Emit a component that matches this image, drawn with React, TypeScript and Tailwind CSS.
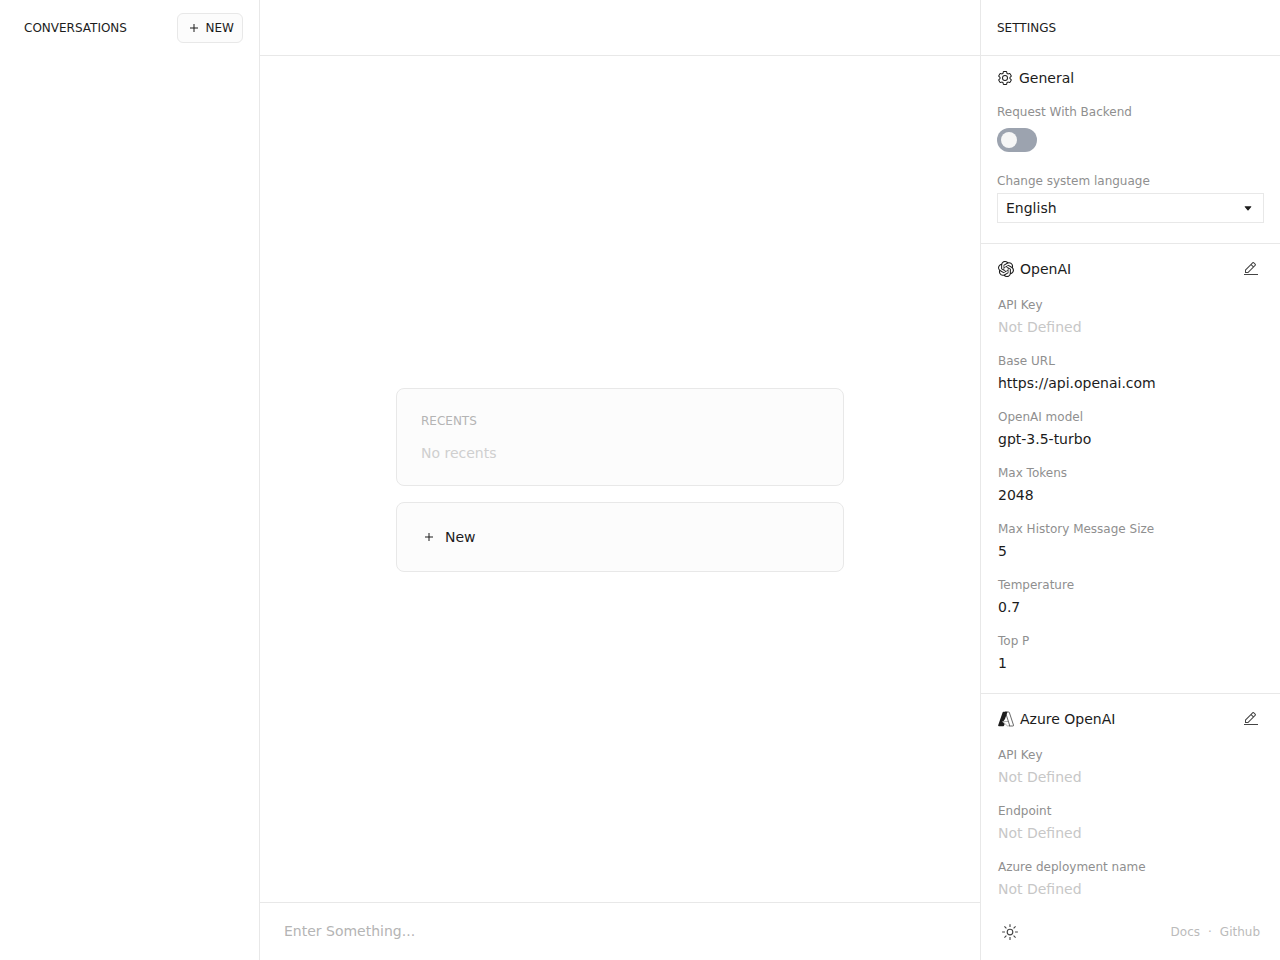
import { useId, useState } from "react";
import type { ReactNode } from "react";
import { SiOpenai } from "react-icons/si";

type Field = { label: string; value?: string };

const openAiFields: Field[] = [
  { label: "API Key" },
  { label: "Base URL", value: "https://api.openai.com" },
  { label: "OpenAI model", value: "gpt-3.5-turbo" },
  { label: "Max Tokens", value: "2048" },
  { label: "Max History Message Size", value: "5" },
  { label: "Temperature", value: "0.7" },
  { label: "Top P", value: "1" },
];

const azureFields: Field[] = [
  { label: "API Key" },
  { label: "Endpoint" },
  { label: "Azure deployment name" },
];

function Icon({ children, size = "size-4" }: { children: ReactNode; size?: string }) {
  return (
    <svg viewBox="0 0 32 32" className={`${size} shrink-0`} fill="currentColor" aria-hidden="true">
      {children}
    </svg>
  );
}

function PlusIcon() {
  return (
    <Icon>
      <path d="M17 15V8h-2v7H8v2h7v7h2v-7h7v-2z" />
    </Icon>
  );
}

function GearIcon() {
  return (
    <Icon>
      <path d="M27 16.76v-1.53l1.92-1.68A2 2 0 0 0 29.3 11l-2.36-4a2 2 0 0 0-1.73-1a2 2 0 0 0-.64.1l-2.43.82a11.35 11.35 0 0 0-1.31-.75l-.51-2.52a2 2 0 0 0-2-1.61h-4.68a2 2 0 0 0-2 1.61l-.51 2.52a11.48 11.48 0 0 0-1.32.75l-2.38-.86A2 2 0 0 0 6.79 6a2 2 0 0 0-1.73 1L2.7 11a2 2 0 0 0 .41 2.51L5 15.24v1.53l-1.89 1.68A2 2 0 0 0 2.7 21l2.36 4a2 2 0 0 0 1.73 1a2 2 0 0 0 .64-.1l2.43-.82a11.35 11.35 0 0 0 1.31.75l.51 2.52a2 2 0 0 0 2 1.61h4.72a2 2 0 0 0 2-1.61l.51-2.52a11.48 11.48 0 0 0 1.32-.75l2.42.82a2 2 0 0 0 .64.1a2 2 0 0 0 1.73-1l2.28-4a2 2 0 0 0-.41-2.51ZM25.21 24l-3.43-1.16a8.86 8.86 0 0 1-2.71 1.57L18.36 28h-4.72l-.71-3.55a9.36 9.36 0 0 1-2.7-1.57L6.79 24l-2.36-4l2.72-2.4a8.9 8.9 0 0 1 0-3.13L4.43 12l2.36-4l3.43 1.16a8.86 8.86 0 0 1 2.71-1.57L13.64 4h4.72l.71 3.55a9.36 9.36 0 0 1 2.7 1.57L25.21 8l2.36 4l-2.72 2.4a8.9 8.9 0 0 1 0 3.13L27.57 20Z" />
      <path d="M16 22a6 6 0 1 1 6-6a5.94 5.94 0 0 1-6 6Zm0-10a3.91 3.91 0 0 0-4 4a3.91 3.91 0 0 0 4 4a3.91 3.91 0 0 0 4-4a3.91 3.91 0 0 0-4-4Z" />
    </Icon>
  );
}

function EditIcon() {
  return (
    <Icon>
      <path d="M2 26h28v2H2zM25.4 9c.8-.8.8-2 0-2.8l-3.6-3.6c-.8-.8-2-.8-2.8 0l-15 15V24h6.4l15-15zm-5-5L24 7.6l-3 3L17.4 7l3-3zM6 22v-3.6l10-10l3.6 3.6l-10 10H6z" />
    </Icon>
  );
}

function SunIcon() {
  return (
    <Icon size="size-[18px]">
      <path d="M16 12.005a4 4 0 1 1-4 4a4.005 4.005 0 0 1 4-4m0-2a6 6 0 1 0 6 6a6 6 0 0 0-6-6zM5.394 6.813L6.81 5.399l3.505 3.506L8.9 10.319zM2 15.005h5v2H2zm3.394 10.193L8.9 21.692l1.414 1.414l-3.505 3.506zM15 25.005h2v5h-2zm6.687-1.9l1.414-1.414l3.506 3.506l-1.414 1.414zm3.313-8.1h5v2h-5zm-3.313-6.101l3.506-3.506l1.414 1.414l-3.506 3.506zM15 2.005h2v5h-2z" />
    </Icon>
  );
}

function AzureIcon() {
  return (
    <svg viewBox="0 0 96 96" className="size-4 shrink-0" fill="currentColor" aria-hidden="true">
      <path d="M33 4h24L42 48 34 60H29l-3 5 14 13-4 10a5 5 0 0 1-4 3H6a5 5 0 0 1-5-6L28 8a5 5 0 0 1 5-4z" />
      <path
        d="M42 6h22a4 4 0 0 1 4 3l25 76a4 4 0 0 1-4 5H66a5 5 0 0 0 3-6L45 9a5 5 0 0 0-3-3z"
        fill="none"
        stroke="currentColor"
        strokeWidth="4"
      />
      <path d="M61 63H28l28 26h10" fill="none" stroke="currentColor" strokeWidth="2" />
    </svg>
  );
}

function FieldList({ fields }: { fields: Field[] }) {
  return (
    <dl className="mt-4 flex flex-col gap-4">
      {fields.map((field) => (
        <div key={field.label} className="flex flex-col gap-1">
          <dt className="text-xs text-[#8f8f8f]">{field.label}</dt>
          <dd className={field.value ? "text-sm" : "text-sm text-[#c7c7c7]"}>
            {field.value ?? "Not Defined"}
          </dd>
        </div>
      ))}
    </dl>
  );
}

function ProviderSection({ title, icon, fields }: { title: string; icon: ReactNode; fields: Field[] }) {
  return (
    <section className="border-b border-[#e8e8e8] px-[17px] pt-[13px] pb-5">
      <div className="flex h-6 items-center justify-between">
        <h3 className="flex items-center gap-1.5 text-sm">
          {icon}
          {title}
        </h3>
        <button type="button" aria-label={`Edit ${title}`} className="p-1 text-[#444444]">
          <EditIcon />
        </button>
      </div>
      <FieldList fields={fields} />
    </section>
  );
}

export default function App() {
  const [backend, setBackend] = useState(false);
  const [language, setLanguage] = useState("en");
  const backendId = useId();
  const languageId = useId();

  return (
    <div className="flex h-screen bg-white font-['DejaVu_Sans',sans-serif] text-[#1c1c1c]">
      <aside className="w-65 shrink-0 border-r border-[#e8e8e8]">
        <header className="flex h-14 items-center justify-between pr-4 pl-6">
          <h2 className="text-xs">CONVERSATIONS</h2>
          <button
            type="button"
            className="flex h-[30px] items-center gap-1 rounded-md border border-[#e8e8e8] bg-[#fcfcfc] px-2 text-xs"
          >
            <PlusIcon />
            NEW
          </button>
        </header>
      </aside>

      <main className="flex min-w-0 flex-1 flex-col">
        <header className="h-14 shrink-0 border-b border-[#e8e8e8]" />
        <div className="flex flex-1 flex-col items-center justify-center gap-4 px-6 pt-0.5">
          <section className="w-full max-w-md rounded-lg border border-[#e8e8e8] bg-[#fcfcfc] p-6">
            <h2 className="text-xs text-[#b4b4b4]">RECENTS</h2>
            <p className="mt-4 text-sm leading-4 text-[#cfcfcf]">No recents</p>
          </section>
          <button
            type="button"
            className="flex w-full max-w-md items-center gap-2 rounded-lg border border-[#e8e8e8] bg-[#fcfcfc] p-6 text-sm"
          >
            <PlusIcon />
            New
          </button>
        </div>
        <footer className="flex h-[58px] shrink-0 items-start border-t border-[#e8e8e8] px-6 pt-[18px]">
          <input
            type="text"
            aria-label="Message"
            placeholder="Enter Something..."
            className="h-5 w-full bg-transparent text-sm outline-none placeholder:text-[#b4b4b4]"
          />
        </footer>
      </main>

      <aside className="flex w-75 shrink-0 flex-col border-l border-[#e8e8e8]">
        <header className="flex h-14 shrink-0 items-center border-b border-[#e8e8e8] px-4">
          <h2 className="text-xs">SETTINGS</h2>
        </header>
        <div className="min-h-0 flex-1 overflow-y-auto [scrollbar-width:none]">
          <section className="border-b border-[#e8e8e8] px-4 pt-3 pb-5">
            <h3 className="flex items-center gap-1.5 text-sm">
              <GearIcon />
              General
            </h3>
            <label htmlFor={backendId} className="mt-4 block text-xs text-[#8f8f8f]">
              Request With Backend
            </label>
            <button
              id={backendId}
              type="button"
              role="switch"
              aria-checked={backend}
              onClick={() => setBackend(!backend)}
              className={
                backend
                  ? "mt-2 flex h-6 w-10 items-center justify-end rounded-full bg-emerald-500 px-1"
                  : "mt-2 flex h-6 w-10 items-center rounded-full bg-[#9ca3af] px-1"
              }
            >
              <span className="size-4 rounded-full bg-[#f6f6f6]" />
            </button>
            <label htmlFor={languageId} className="mt-[21px] block text-xs text-[#8f8f8f]">
              Change system language
            </label>
            <div className="mt-1 grid items-center">
              <select
                id={languageId}
                value={language}
                onChange={(event) => setLanguage(event.target.value)}
                className="col-start-1 row-start-1 h-[30px] w-full appearance-none border border-[#e8e8e8] bg-transparent px-2 text-sm outline-none"
              >
                <option value="en">English</option>
                <option value="zh">简体中文</option>
              </select>
              <svg
                viewBox="0 0 16 16"
                className="pointer-events-none col-start-1 row-start-1 mr-2 size-4 justify-self-end"
                fill="currentColor"
                aria-hidden="true"
              >
                <path d="M5.1 6.2h5.8q.8 0 .3.7L8.5 10.2q-.5.6-1 0L4.8 6.9q-.5-.7.3-.7z" />
              </svg>
            </div>
          </section>
          <ProviderSection
            title="OpenAI"
            icon={<SiOpenai className="size-4" aria-hidden="true" />}
            fields={openAiFields}
          />
          <ProviderSection title="Azure OpenAI" icon={<AzureIcon />} fields={azureFields} />
        </div>
        <footer className="flex h-14 shrink-0 items-center justify-between px-5">
          <button type="button" aria-label="Toggle theme" className="text-[#444444]">
            <SunIcon />
          </button>
          <nav className="flex items-center gap-2 text-xs text-[#bbbbbb]">
            <a href="#docs">Docs</a>
            <span>·</span>
            <a href="#github">Github</a>
          </nav>
        </footer>
      </aside>
    </div>
  );
}
